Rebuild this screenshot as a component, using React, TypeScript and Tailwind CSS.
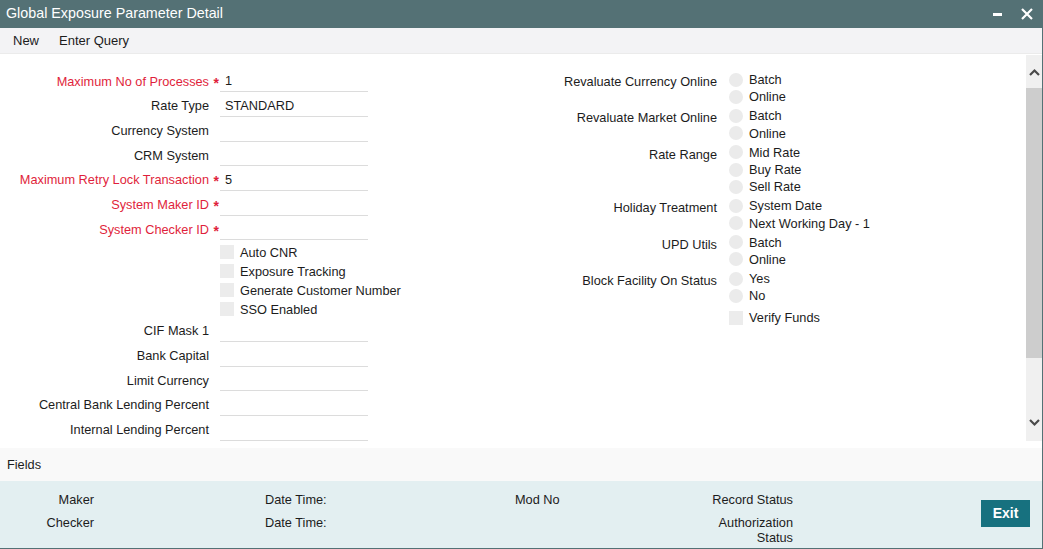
import React from 'react';

type FieldRow = { label: string; value?: string; required?: boolean };

const topFields: FieldRow[] = [
  { label: 'Maximum No of Processes', value: '1', required: true },
  { label: 'Rate Type', value: 'STANDARD' },
  { label: 'Currency System' },
  { label: 'CRM System' },
  { label: 'Maximum Retry Lock Transaction', value: '5', required: true },
  { label: 'System Maker ID', required: true },
  { label: 'System Checker ID', required: true },
];

const checks = ['Auto CNR', 'Exposure Tracking', 'Generate Customer Number', 'SSO Enabled'];

const bottomFields: FieldRow[] = [
  { label: 'CIF Mask 1' },
  { label: 'Bank Capital' },
  { label: 'Limit Currency' },
  { label: 'Central Bank Lending Percent' },
  { label: 'Internal Lending Percent' },
];

const radioGroups = [
  { label: 'Revaluate Currency Online', options: ['Batch', 'Online'] },
  { label: 'Revaluate Market Online', options: ['Batch', 'Online'] },
  { label: 'Rate Range', options: ['Mid Rate', 'Buy Rate', 'Sell Rate'] },
  { label: 'Holiday Treatment', options: ['System Date', 'Next Working Day - 1'] },
  { label: 'UPD Utils', options: ['Batch', 'Online'] },
  { label: 'Block Facility On Status', options: ['Yes', 'No'] },
];

function TextRow({ row }: { row: FieldRow }) {
  return (
    <div className="flex h-[24.67px] items-center">
      <div className="w-[209px] text-right">
        <span className={row.required ? 'relative text-[#df1f3c]' : ''}>
          {row.label}
          {row.required && (
            <span className="absolute -right-[10px] -top-[1px] text-[14px] font-bold text-[#df1f3c]">*</span>
          )}
        </span>
      </div>
      <div className="ml-[11px] flex h-[22px] w-[148px] items-center border-b border-[#dcdcdc] pl-[5px]">
        {row.value}
      </div>
    </div>
  );
}

function Checkbox({ label }: { label: string }) {
  return (
    <div className="flex h-[19px] items-center">
      <span className="h-[14px] w-[14px] bg-[#ececec]" />
      <span className="ml-[6px]">{label}</span>
    </div>
  );
}

export default function App() {
  return (
    <div className="flex h-[549px] w-[1043px] flex-col border-b border-r border-[#547175] bg-white font-['Liberation_Sans',Arial,sans-serif] text-[12.75px] text-[#1c1c1c]">
      {/* Title bar */}
      <div className="flex h-[28px] shrink-0 items-center bg-[#547175] pl-[6px] pr-[8px] text-white">
        <span className="text-[14.3px]">Global Exposure Parameter Detail</span>
        <div className="ml-auto flex items-center gap-[18px]">
          <span className="mt-[1px] h-[3px] w-[9px] bg-white" />
          <svg width="14" height="14" viewBox="0 0 14 14">
            <path d="M2 2 L12 12 M12 2 L2 12" stroke="white" strokeWidth="2.2" />
          </svg>
        </div>
      </div>

      {/* Menu */}
      <div className="flex h-[25px] shrink-0 items-center gap-[20px] bg-[#f3f3f5] pl-[13px] text-[13px]">
        <span>New</span>
        <span>Enter Query</span>
      </div>

      {/* Body */}
      <div className="flex h-[395px] shrink-0 border-t border-[#ebebeb]">
        <div className="flex flex-1">
          {/* Left column */}
          <div className="w-[520px] pt-[15px]">
            {topFields.map((r) => (
              <TextRow key={r.label} row={r} />
            ))}
            <div className="ml-[220px] mt-[1px]">
              {checks.map((c) => (
                <Checkbox key={c} label={c} />
              ))}
            </div>
            {bottomFields.map((r) => (
              <TextRow key={r.label} row={r} />
            ))}
          </div>

          {/* Right column */}
          <div className="flex flex-col gap-[2px] pt-[17px]">
            {radioGroups.map((g) => (
              <div key={g.label} className="flex">
                <div className="w-[197px] pt-[2px] text-right leading-[17px]">{g.label}</div>
                <div className="ml-[12px]">
                  {g.options.map((o) => (
                    <div key={o} className="flex h-[17.2px] items-center">
                      <span className="h-[14px] w-[14px] rounded-full bg-[#ebebeb]" />
                      <span className="ml-[6px]">{o}</span>
                    </div>
                  ))}
                </div>
              </div>
            ))}
            <div className="ml-[209px] mt-[3px] flex h-[17px] items-center">
              <span className="h-[14px] w-[14px] bg-[#ececec]" />
              <span className="ml-[6px]">Verify Funds</span>
            </div>
          </div>
        </div>

        {/* Scrollbar */}
        <div className="mb-[7px] mt-[1px] flex w-[16px] flex-col bg-[#f0f0f0]">
          <div className="flex h-[33px] items-center justify-center">
            <svg width="11" height="8" viewBox="0 0 11 8">
              <path d="M1 7 L5.5 2.5 L10 7" fill="none" stroke="#4a4a4a" strokeWidth="2.2" />
            </svg>
          </div>
          <div className="h-[270px] bg-[#cdcdcd]" />
          <div className="flex flex-1 items-end justify-center pb-[14px]">
            <svg width="11" height="8" viewBox="0 0 11 8">
              <path d="M1 1 L5.5 5.5 L10 1" fill="none" stroke="#4a4a4a" strokeWidth="2.2" />
            </svg>
          </div>
        </div>
      </div>

      {/* Fields bar */}
      <div className="flex h-[33px] shrink-0 items-center bg-[#f9f9f9] pl-[7px]">Fields</div>

      {/* Footer */}
      <div className="flex flex-1 bg-[#e3eff1]">
        <div className="flex-1 pt-[11px]">
          <div className="flex h-[16px] items-center leading-[16px]">
            <div className="w-[94px] text-right">Maker</div>
            <div className="ml-[171px] w-[250px]">Date Time:</div>
            <div className="w-[194px]">Mod No</div>
            <div className="w-[84px] text-right">Record Status</div>
          </div>
          <div className="mt-[7px] flex items-start leading-[15px]">
            <div className="w-[94px] text-right">Checker</div>
            <div className="ml-[171px] w-[250px]">Date Time:</div>
            <div className="w-[194px]" />
            <div className="w-[84px] text-right">Authorization Status</div>
          </div>
        </div>
        <button className="mr-[12px] mt-[19px] h-[27px] w-[49px] self-start bg-[#17717f] text-[14px] font-bold text-white">
          Exit
        </button>
      </div>
    </div>
  );
}
